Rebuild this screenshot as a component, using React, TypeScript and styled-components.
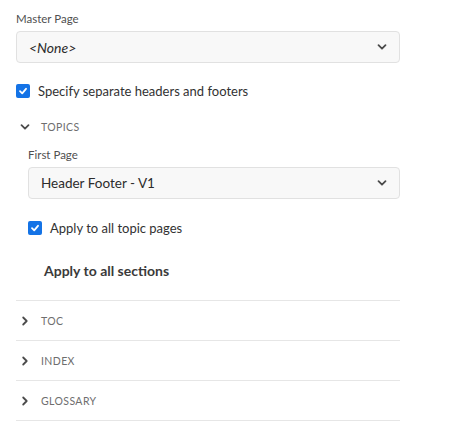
import React from "react";
import styled, { createGlobalStyle } from "styled-components";

const GlobalStyle = createGlobalStyle`
  body {
    margin: 0;
    background: #ffffff;
    font-family: Lato, "Noto Sans", sans-serif;
    color: #2c2c2c;
  }
  * { box-sizing: border-box; }
`;

const Panel = styled.div`
  width: 400px;
  padding: 11px 0 0 16px;
  display: flex;
  flex-direction: column;
`;

const FieldLabel = styled.div<{ indent?: number }>`
  font-size: 11.5px;
  color: #505050;
  line-height: 16px;
  margin-left: ${(p) => p.indent || 0}px;
  margin-bottom: 4px;
`;

const Select = styled.div<{ indent?: number }>`
  margin-left: ${(p) => p.indent || 0}px;
  height: 32px;
  border: 1px solid #e1e1e1;
  border-radius: 4px;
  background: #f8f8f8;
  display: flex;
  align-items: center;
  justify-content: space-between;
  padding: 0 12px 0 12px;
`;

const SelectValue = styled.span<{ italic?: boolean }>`
  font-size: ${(p) => (p.italic ? 14 : 13.5)}px;
  font-style: ${(p) => (p.italic ? "italic" : "normal")};
  color: #2c2c2c;
`;

const CheckRow = styled.label<{ indent?: number; gapTop: number }>`
  display: flex;
  align-items: center;
  gap: 8px;
  margin-left: ${(p) => p.indent || 0}px;
  margin-top: ${(p) => p.gapTop}px;
  font-size: 13px;
  color: #323232;
  height: 20px;
`;

const Box = styled.span`
  width: 14px;
  height: 14px;
  border-radius: 2px;
  background: #1473e6;
  display: flex;
  align-items: center;
  justify-content: center;
`;

const SectionHead = styled.div<{ open?: boolean }>`
  display: flex;
  align-items: center;
  height: 40px;
  gap: 11px;
  padding-left: 4px;
  margin-top: ${(p) => (p.open ? 6 : 0)}px;
  font-size: 10.5px;
  letter-spacing: 0.4px;
  text-transform: uppercase;
  color: #6e6e6e;
  border-bottom: ${(p) => (p.open ? "none" : "1px solid #e6e6e6")};
`;

const Collapsed = styled.div`
  border-top: 1px solid #e6e6e6;
  margin-top: 21px;
`;

const Bold = styled.div`
  font-size: 14px;
  font-weight: 700;
  color: #3a3a3a;
  margin-left: 28px;
  margin-top: 24px;
`;

const Chevron = ({ dir }: { dir: "down" | "right" }) => (
  <svg width="10" height="10" viewBox="0 0 10 10">
    <path
      d={dir === "down" ? "M1.5 3.2 L5 6.7 L8.5 3.2" : "M3.2 1.5 L6.7 5 L3.2 8.5"}
      fill="none"
      stroke="#4b4b4b"
      strokeWidth="1.8"
      strokeLinecap="round"
      strokeLinejoin="round"
    />
  </svg>
);

const Check = () => (
  <Box>
    <svg width="10" height="10" viewBox="0 0 10 10">
      <path d="M2 5.2 L4.2 7.3 L8 2.8" fill="none" stroke="#fff" strokeWidth="1.8" strokeLinecap="round" strokeLinejoin="round" />
    </svg>
  </Box>
);

export default function App() {
  return (
    <>
      <GlobalStyle />
      <Panel>
        <FieldLabel>Master Page</FieldLabel>
        <Select>
          <SelectValue italic>&lt;None&gt;</SelectValue>
          <Chevron dir="down" />
        </Select>
        <CheckRow gapTop={18}>
          <Check />
          Specify separate headers and footers
        </CheckRow>
        <SectionHead open>
          <Chevron dir="down" />
          Topics
        </SectionHead>
        <FieldLabel indent={12}>First Page</FieldLabel>
        <Select indent={12}>
          <SelectValue>Header Footer - V1</SelectValue>
          <Chevron dir="down" />
        </Select>
        <CheckRow indent={12} gapTop={19}>
          <Check />
          Apply to all topic pages
        </CheckRow>
        <Bold>Apply to all sections</Bold>
        <Collapsed>
          <SectionHead>
            <Chevron dir="right" />
            TOC
          </SectionHead>
          <SectionHead>
            <Chevron dir="right" />
            Index
          </SectionHead>
          <SectionHead>
            <Chevron dir="right" />
            Glossary
          </SectionHead>
        </Collapsed>
      </Panel>
    </>
  );
}
